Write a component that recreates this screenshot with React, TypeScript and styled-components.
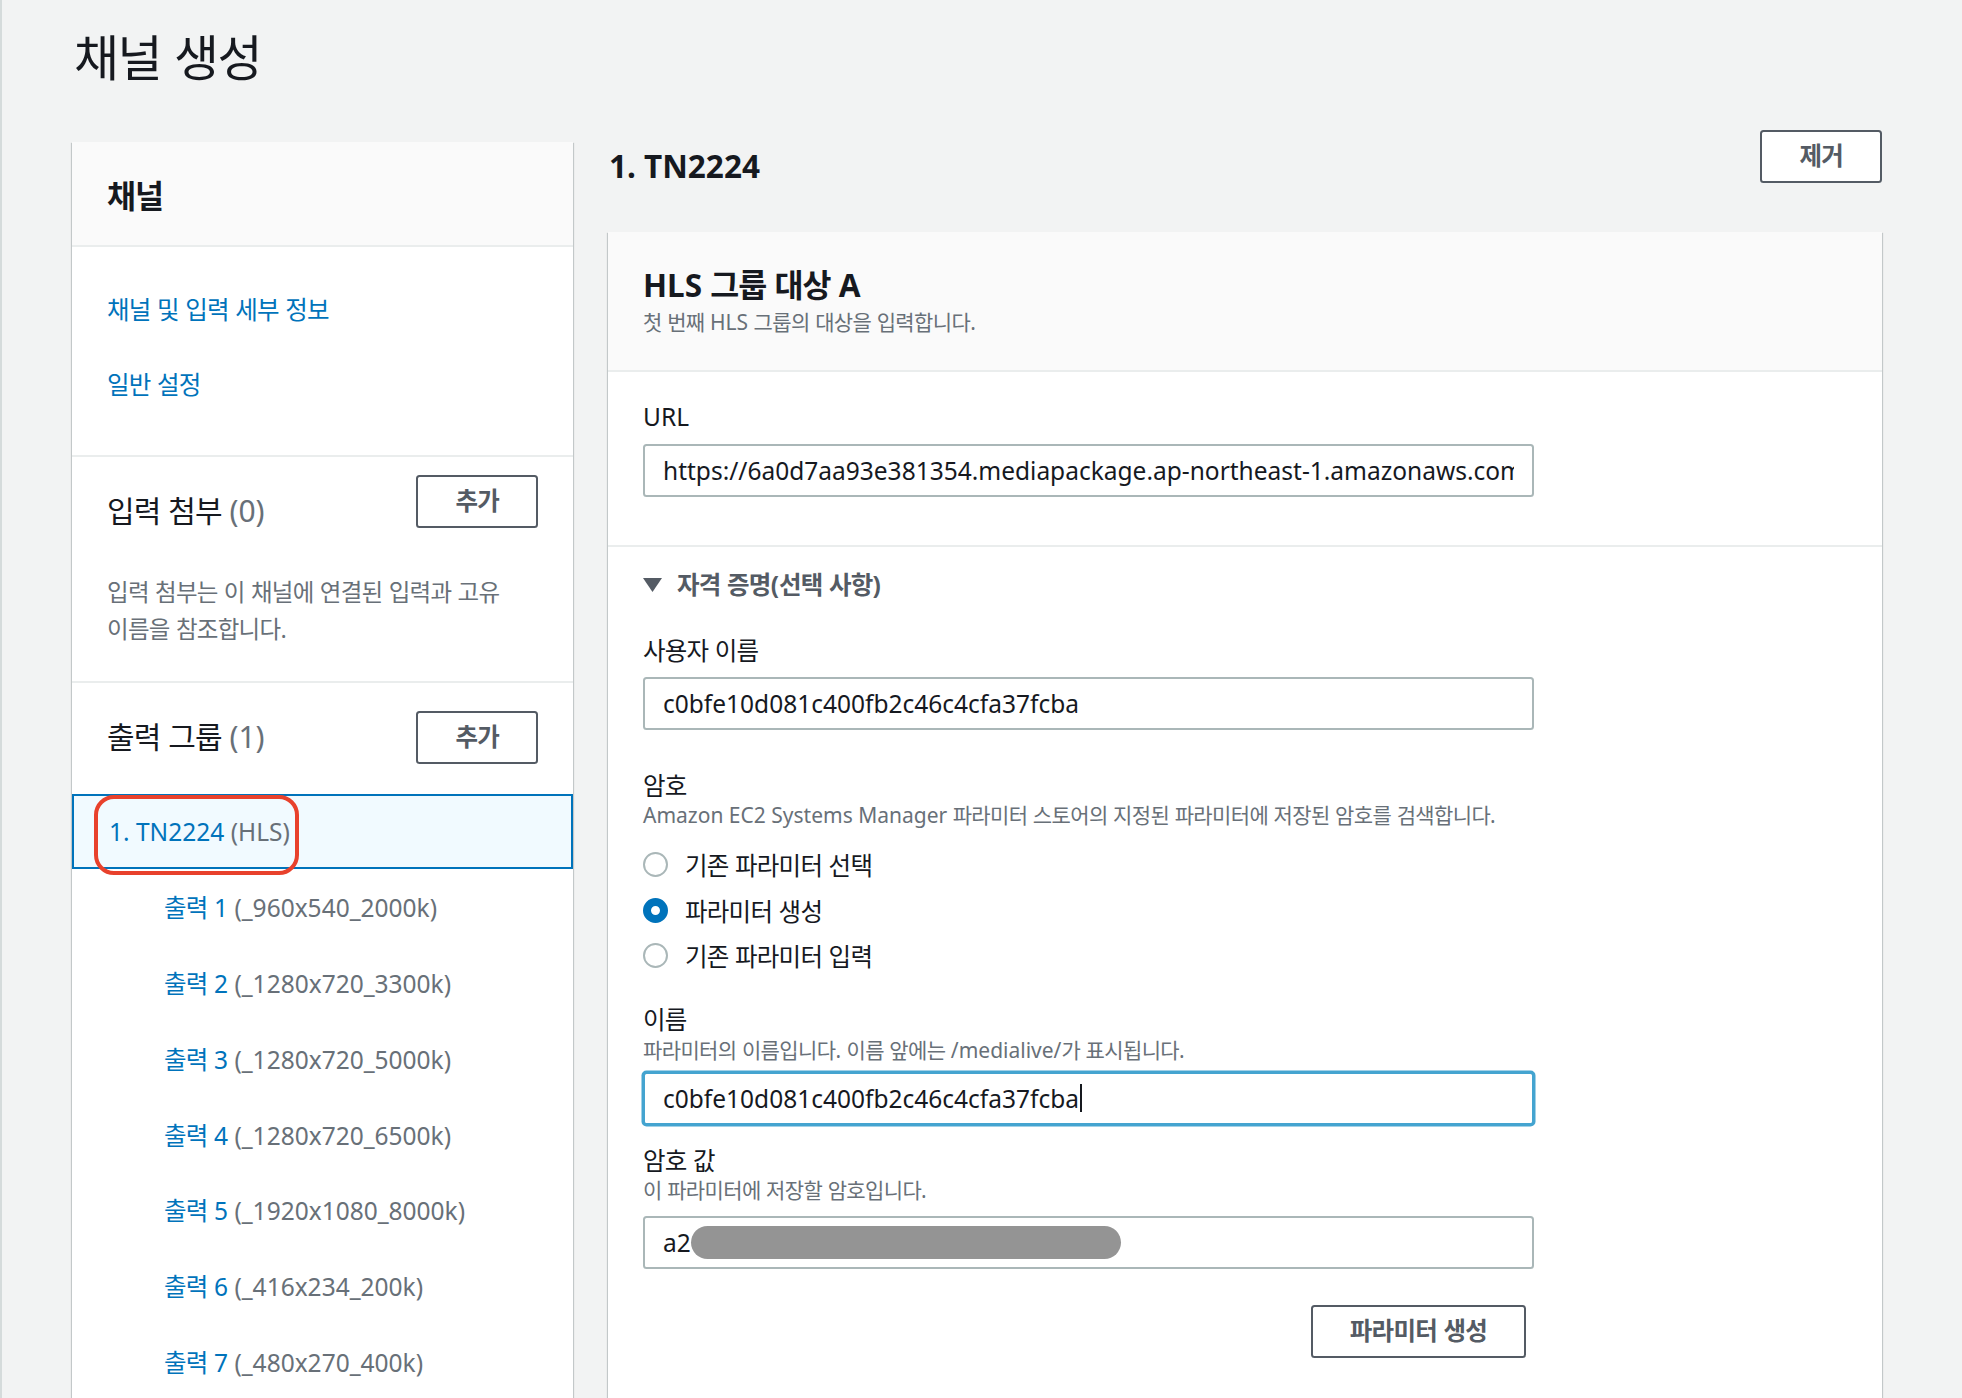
import React from 'react';
import styled, { createGlobalStyle, css } from 'styled-components';

const GlobalStyle = createGlobalStyle`
  * { box-sizing: border-box; }
  html, body { margin: 0; padding: 0; }
  body {
    background: #f2f3f3;
    font-family: "Noto Sans", "Noto Sans CJK KR", sans-serif;
    color: #16191f;
    word-break: keep-all;
  }
`;

/* Hangul runs are set slightly tighter so the Korean text keeps the width of the original font */
const Ko = styled.span`
  letter-spacing: -0.03em;
`;

const HANGUL = /([\u1100-\u11FF\u3130-\u318F\uAC00-\uD7AF]+)/;

function T({ children }: { children: string }) {
  const parts = children.split(HANGUL);
  return <>{parts.map((p, i) => (i % 2 === 1 ? <Ko key={i}>{p}</Ko> : p))}</>;
}

const cardShadow = css`
  box-shadow: 0 1px 1px 0 rgba(0, 28, 36, 0.3), 1px 1px 1px 0 rgba(0, 28, 36, 0.15),
    -1px 1px 1px 0 rgba(0, 28, 36, 0.15);
`;

const Page = styled.div`
  height: 100vh;
  overflow: hidden;
  border-left: 2px solid #d5dbdb;
  padding: 28px 80px 0 70px;
`;

const PageTitle = styled.h1`
  margin: 0;
  padding-left: 2px;
  font-size: 49px;
  line-height: 59px;
  font-weight: 400;
`;

const Layout = styled.div`
  margin-top: 43px;
  display: grid;
  grid-template-columns: 501px 1fr;
  column-gap: 35px;
  align-items: start;
`;

/* ---------- side panel ---------- */

const SidePanel = styled.nav`
  margin-top: 12px;
  background: #fff;
  ${cardShadow}
`;

const PanelHeader = styled.h2`
  margin: 0;
  height: 105px;
  display: flex;
  align-items: center;
  padding: 0 35px;
  background: #fafafa;
  border-bottom: 2px solid #eaeded;
  font-size: 31.5px;
  font-weight: 700;
`;

const NavList = styled.div`
  padding: 24px 35px 33.5px;
  border-bottom: 2px solid #eaeded;
`;

const NavLink = styled.a`
  display: flex;
  align-items: center;
  height: 75px;
  font-size: 24.5px;
  color: #0073bb;
  text-decoration: none;
`;

const PanelSection = styled.section<{ $top: number; $bottom: number; $divider?: boolean }>`
  padding: ${(p) => p.$top}px 35px ${(p) => p.$bottom}px;
  border-bottom: ${(p) => (p.$divider ? '2px solid #eaeded' : 'none')};
`;

const SectionRow = styled.div<{ $center?: boolean }>`
  display: flex;
  justify-content: space-between;
  align-items: ${(p) => (p.$center ? 'center' : 'flex-start')};
`;

const SectionTitle = styled.h3<{ $offset: number }>`
  margin: ${(p) => p.$offset}px 0 0;
  font-size: 30px;
  line-height: 40px;
  font-weight: 400;
`;

const Count = styled.span`
  color: #687078;
`;

const SectionDesc = styled.p`
  margin: 43px 0 0;
  font-size: 23.5px;
  line-height: 37px;
  color: #687078;
`;

const Button = styled.button`
  height: 53px;
  min-width: 119px;
  padding: 0 37px;
  border: 2px solid #545b64;
  border-radius: 3.5px;
  background: #fff;
  color: #545b64;
  font-family: "Noto Sans", "Noto Sans CJK KR", sans-serif;
  font-size: 24.5px;
  font-weight: 700;
  line-height: 1;
  white-space: nowrap;
`;

const GroupList = styled.div`
  display: flex;
  flex-direction: column;
  padding-bottom: 60px;
`;

const GroupItem = styled.a<{ $selected?: boolean }>`
  position: relative;
  display: flex;
  align-items: center;
  height: 75px;
  padding-left: 35px;
  border: 2px solid ${(p) => (p.$selected ? '#0073bb' : 'transparent')};
  background: ${(p) => (p.$selected ? '#f1faff' : 'transparent')};
  font-size: 24.5px;
  color: #0073bb;
  text-decoration: none;
`;

const SubItem = styled.a`
  display: flex;
  align-items: center;
  height: 75.75px;
  padding-left: 92px;
  font-size: 24.5px;
  color: #0073bb;
  text-decoration: none;
  white-space: nowrap;
`;

const Muted = styled.span`
  color: #687078;
`;

const Highlight = styled.span`
  position: absolute;
  top: -1px;
  left: 20px;
  width: 205px;
  height: 80px;
  border: 4.5px solid #e8412c;
  border-radius: 20px;
  pointer-events: none;
`;

/* ---------- main column ---------- */

const Main = styled.main``;

const MainHeader = styled.div`
  display: flex;
  justify-content: space-between;
  align-items: flex-start;
`;

const GroupTitle = styled.h2`
  margin: 17px 0 0;
  padding-left: 1px;
  font-size: 31.5px;
  line-height: 38.5px;
  font-weight: 700;
`;

const Card = styled.div`
  margin-top: 46px;
  background: #fff;
  ${cardShadow}
`;

const CardHeader = styled.div`
  padding: 34px 35px;
  background: #fafafa;
  border-bottom: 2px solid #eaeded;
`;

const CardTitle = styled.h2`
  margin: 0;
  font-size: 31.5px;
  line-height: 38.5px;
  font-weight: 700;
`;

const Desc = styled.div<{ $mt?: number }>`
  margin-top: ${(p) => p.$mt ?? 0}px;
  font-size: 21px;
  line-height: 28px;
  color: #687078;
`;

const CardSection = styled.section<{ $top: number; $bottom: number; $divider?: boolean }>`
  padding: ${(p) => p.$top}px 35px ${(p) => p.$bottom}px;
  border-bottom: ${(p) => (p.$divider ? '2px solid #eaeded' : 'none')};
`;

const Field = styled.div<{ $mt: number }>`
  margin-top: ${(p) => p.$mt}px;
`;

const Label = styled.div`
  font-size: 24.5px;
  line-height: 38.5px;
`;

const InputBox = styled.div<{ $focused?: boolean; $mt: number }>`
  margin-top: ${(p) => p.$mt}px;
  width: 891px;
  height: 53px;
  display: flex;
  align-items: center;
  padding: 0 18px;
  border: 2px solid ${(p) => (p.$focused ? '#44a4d0' : '#aab7b8')};
  box-shadow: ${(p) => (p.$focused ? '0 0 0 1.5px #44a4d0' : 'none')};
  border-radius: 3.5px;
  background: #fff;
  font-size: 24.5px;
`;

const InputText = styled.span`
  flex: 1;
  display: flex;
  align-items: center;
  white-space: nowrap;
  overflow: hidden;
`;

const Caret = styled.span`
  display: inline-block;
  width: 1.5px;
  height: 28px;
  margin-left: 1px;
  background: #16191f;
`;

const Redacted = styled.span`
  display: inline-block;
  flex: none;
  width: 430px;
  height: 33px;
  border-radius: 17px;
  background: #949494;
`;

const ToggleRow = styled.div`
  display: flex;
  align-items: center;
  gap: 15px;
  font-size: 24.5px;
  line-height: 38.5px;
  font-weight: 700;
  color: #545b64;
`;

const RadioGroup = styled.div`
  margin-top: 13px;
  display: flex;
  flex-direction: column;
`;

const RadioRow = styled.label`
  display: flex;
  align-items: center;
  gap: 17px;
  height: 45.5px;
  font-size: 24.5px;
`;

const RadioDot = styled.span<{ $checked?: boolean }>`
  width: 25px;
  height: 25px;
  border-radius: 50%;
  background: #fff;
  border: ${(p) => (p.$checked ? '8px solid #0073bb' : '2px solid #aab7b8')};
`;

const ButtonRow = styled.div`
  width: 891px;
  margin-top: 36px;
  padding-right: 8px;
  display: flex;
  justify-content: flex-end;
`;

const outputs: [string, string][] = [
  ['출력 1', '(_960x540_2000k)'],
  ['출력 2', '(_1280x720_3300k)'],
  ['출력 3', '(_1280x720_5000k)'],
  ['출력 4', '(_1280x720_6500k)'],
  ['출력 5', '(_1920x1080_8000k)'],
  ['출력 6', '(_416x234_200k)'],
  ['출력 7', '(_480x270_400k)'],
];

const radios = [
  { label: '기존 파라미터 선택', checked: false },
  { label: '파라미터 생성', checked: true },
  { label: '기존 파라미터 입력', checked: false },
];

export default function App() {
  return (
    <>
      <GlobalStyle />
      <Page>
        <PageTitle>
          <T>채널 생성</T>
        </PageTitle>
        <Layout>
          <SidePanel>
            <PanelHeader>
              <T>채널</T>
            </PanelHeader>
            <NavList>
              <NavLink href="#">
                <span>
                  <T>채널 및 입력 세부 정보</T>
                </span>
              </NavLink>
              <NavLink href="#">
                <span>
                  <T>일반 설정</T>
                </span>
              </NavLink>
            </NavList>
            <PanelSection $top={18} $bottom={33} $divider>
              <SectionRow>
                <SectionTitle $offset={16}>
                  <T>입력 첨부</T> <Count>(0)</Count>
                </SectionTitle>
                <Button>
                  <T>추가</T>
                </Button>
              </SectionRow>
              <SectionDesc>
                <T>입력 첨부는 이 채널에 연결된 입력과 고유 이름을 참조합니다.</T>
              </SectionDesc>
            </PanelSection>
            <PanelSection $top={28} $bottom={30.5}>
              <SectionRow $center>
                <SectionTitle $offset={0}>
                  <T>출력 그룹</T> <Count>(1)</Count>
                </SectionTitle>
                <Button>
                  <T>추가</T>
                </Button>
              </SectionRow>
            </PanelSection>
            <GroupList>
              <GroupItem href="#" $selected>
                <span>
                  1. TN2224 <Muted>(HLS)</Muted>
                </span>
                <Highlight />
              </GroupItem>
              {outputs.map(([name, spec]) => (
                <SubItem href="#" key={name}>
                  <span>
                    <T>{name}</T> <Muted>{spec}</Muted>
                  </span>
                </SubItem>
              ))}
            </GroupList>
          </SidePanel>

          <Main>
            <MainHeader>
              <GroupTitle>1. TN2224</GroupTitle>
              <Button>
                <T>제거</T>
              </Button>
            </MainHeader>
            <Card>
              <CardHeader>
                <CardTitle>
                  <T>HLS 그룹 대상 A</T>
                </CardTitle>
                <Desc $mt={4}>
                  <T>첫 번째 HLS 그룹의 대상을 입력합니다.</T>
                </Desc>
              </CardHeader>
              <CardSection $top={26} $bottom={48} $divider>
                <Label>URL</Label>
                <InputBox $mt={7.5}>
                  <InputText>https://6a0d7aa93e381354.mediapackage.ap-northeast-1.amazonaws.com</InputText>
                </InputBox>
              </CardSection>
              <CardSection $top={19} $bottom={80}>
                <ToggleRow>
                  <svg width="19" height="14" viewBox="0 0 19 14" aria-hidden="true">
                    <polygon points="0,0 19,0 9.5,14" fill="#545b64" />
                  </svg>
                  <span>
                    <T>자격 증명(선택 사항)</T>
                  </span>
                </ToggleRow>
                <Field $mt={27}>
                  <Label>
                    <T>사용자 이름</T>
                  </Label>
                  <InputBox $mt={7}>
                    <InputText>c0bfe10d081c400fb2c46c4cfa37fcba</InputText>
                  </InputBox>
                </Field>
                <Field $mt={36.5}>
                  <Label>
                    <T>암호</T>
                  </Label>
                  <Desc $mt={-4}>
                    <T>Amazon EC2 Systems Manager 파라미터 스토어의 지정된 파라미터에 저장된 암호를 검색합니다.</T>
                  </Desc>
                  <RadioGroup>
                    {radios.map((r) => (
                      <RadioRow key={r.label}>
                        <RadioDot $checked={r.checked} />
                        <span>
                          <T>{r.label}</T>
                        </span>
                      </RadioRow>
                    ))}
                  </RadioGroup>
                </Field>
                <Field $mt={22}>
                  <Label>
                    <T>이름</T>
                  </Label>
                  <Desc $mt={-3}>
                    <T>파라미터의 이름입니다. 이름 앞에는 /medialive/가 표시됩니다.</T>
                  </Desc>
                  <InputBox $mt={7.5} $focused>
                    <InputText>
                      c0bfe10d081c400fb2c46c4cfa37fcba
                      <Caret />
                    </InputText>
                  </InputBox>
                </Field>
                <Field $mt={17}>
                  <Label>
                    <T>암호 값</T>
                  </Label>
                  <Desc $mt={-4}>
                    <T>이 파라미터에 저장할 암호입니다.</T>
                  </Desc>
                  <InputBox $mt={12}>
                    <InputText>
                      a2
                      <Redacted />
                    </InputText>
                  </InputBox>
                </Field>
                <ButtonRow>
                  <Button>
                    <T>파라미터 생성</T>
                  </Button>
                </ButtonRow>
              </CardSection>
            </Card>
          </Main>
        </Layout>
      </Page>
    </>
  );
}
